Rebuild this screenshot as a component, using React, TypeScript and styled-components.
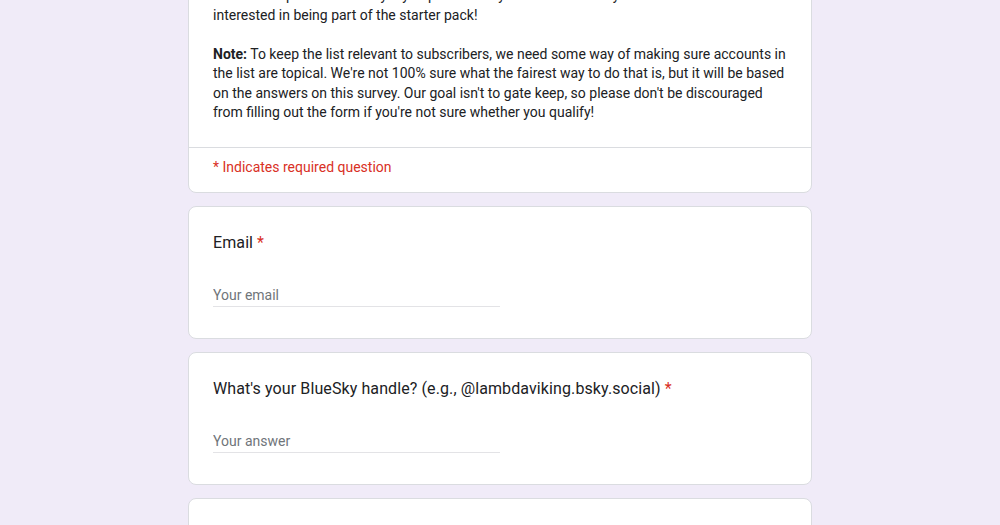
import React from "react";
import styled, { createGlobalStyle } from "styled-components";

const Global = createGlobalStyle`
  html, body { margin: 0; padding: 0; background: #f0ebf8; overflow: hidden; }
  body { font-family: Roboto, "Liberation Sans", Arial, sans-serif; }
`;

const Page = styled.div`
  width: 624px;
  margin: -39px auto 0;
  display: flex;
  flex-direction: column;
  gap: 13px;
`;

const Card = styled.section`
  background: #fff;
  border: 1px solid #dadce0;
  border-radius: 8px;
  box-sizing: border-box;
`;

const Description = styled.div`
  padding: 24px 24px 24px;
  font-size: 14px;
  line-height: 19.5px;
  color: #202124;
  white-space: pre-wrap;
`;

const Strong = styled.span`
  font-weight: 700;
`;

const RequiredNote = styled.div`
  border-top: 1px solid #dadce0;
  padding: 9px 24px 15px;
  font-size: 14px;
  line-height: 20px;
  color: #d93025;
`;

const QuestionCard = styled(Card)`
  padding: 24px 24px 31px;
`;

const Title = styled.div`
  font-size: 16px;
  line-height: 24px;
  color: #202124;
  letter-spacing: 0.1px;
`;

const Star = styled.span`
  color: #d93025;
  margin-left: 4px;
`;

const Field = styled.div`
  margin-top: 16px;
  width: 50%;
  padding: 14px 0 0;
  border-bottom: 1px solid #e3e3e6;
`;

const Input = styled.input`
  display: block;
  width: 100%;
  box-sizing: border-box;
  border: none;
  outline: none;
  padding: 0;
  margin: 0 0 1px;
  height: 20px;
  font-family: Roboto, "Liberation Sans", Arial, sans-serif;
  font-size: 14px;
  line-height: 20px;
  color: #202124;
  background: transparent;
  &::placeholder { color: #70757a; opacity: 1; }
`;

const Question = ({ title, placeholder }: { title: string; placeholder: string }) => (
  <QuestionCard>
    <Title>
      {title}
      <Star>*</Star>
    </Title>
    <Field>
      <Input placeholder={placeholder} />
    </Field>
  </QuestionCard>
);

export default function App() {
  return (
    <>
      <Global />
      <Page>
        <Card>
          <Description>
            {"Please complete this survey if you post about your research and you're\ninterested in being part of the starter pack!\n\n"}
            <Strong>Note:</Strong>
            {" To keep the list relevant to subscribers, we need some way of making sure accounts in the list are topical. We're not 100% sure what the fairest way to do that is, but it will be based on the answers on this survey. Our goal isn't to gate keep, so please don't be discouraged from filling out the form if you're not sure whether you qualify!"}
          </Description>
          <RequiredNote>* Indicates required question</RequiredNote>
        </Card>
        <Question title="Email" placeholder="Your email" />
        <Question
          title="What's your BlueSky handle? (e.g., @lambdaviking.bsky.social)"
          placeholder="Your answer"
        />
        <QuestionCard>
          <Title>&nbsp;</Title>
        </QuestionCard>
      </Page>
    </>
  );
}
